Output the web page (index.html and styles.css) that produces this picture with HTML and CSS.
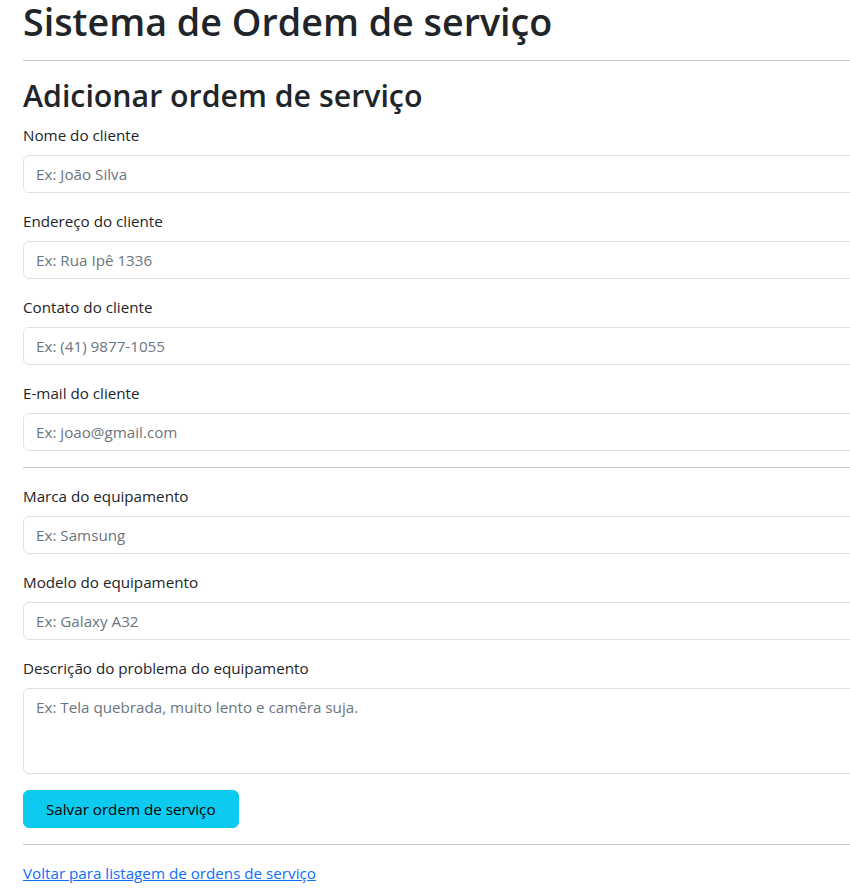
FILE: index.html
```html
<!DOCTYPE html>
<html lang="pt-BR">
<head>
<meta charset="utf-8">
<title>Sistema de Ordem de serviço</title>
<link rel="stylesheet" href="styles.css">
</head>
<body>
<main class="page">
  <h1 class="title">Sistema de Ordem de serviço</h1>
  <hr class="rule">
  <h2 class="subtitle">Adicionar ordem de serviço</h2>
  <form class="form">
    <div class="field">
      <label class="label" for="nome">Nome do cliente</label>
      <input class="control" id="nome" type="text" placeholder="Ex: João Silva">
    </div>
    <div class="field">
      <label class="label" for="endereco">Endereço do cliente</label>
      <input class="control" id="endereco" type="text" placeholder="Ex: Rua Ipê 1336">
    </div>
    <div class="field">
      <label class="label" for="contato">Contato do cliente</label>
      <input class="control" id="contato" type="text" placeholder="Ex: (41) 9877-1055">
    </div>
    <div class="field">
      <label class="label" for="email">E-mail do cliente</label>
      <input class="control" id="email" type="email" placeholder="Ex: joao@gmail.com">
    </div>
    <hr class="rule">
    <div class="field">
      <label class="label" for="marca">Marca do equipamento</label>
      <input class="control" id="marca" type="text" placeholder="Ex: Samsung">
    </div>
    <div class="field">
      <label class="label" for="modelo">Modelo do equipamento</label>
      <input class="control" id="modelo" type="text" placeholder="Ex: Galaxy A32">
    </div>
    <div class="field">
      <label class="label" for="descricao">Descrição do problema do equipamento</label>
      <textarea class="control area" id="descricao" rows="3" placeholder="Ex: Tela quebrada, muito lento e camêra suja."></textarea>
    </div>
    <button class="btn" type="button">Salvar ordem de serviço</button>
  </form>
  <hr class="rule">
  <a class="back" href="#">Voltar para listagem de ordens de serviço</a>
</main>
</body>
</html>
```
FILE: styles.css
```css
html, body {
  margin: 0;
  padding: 0;
  overflow: hidden;
  background: #fff;
}
body {
  font-family: "Open Sans", "Noto Sans", sans-serif;
  font-size: 15.2px;
  line-height: 24px;
  color: #212529;
}
.page {
  width: 1100px;
  padding-left: 23px;
}
.title {
  font-size: 37.7px;
  line-height: 44px;
  font-weight: 600;
  margin: 0 0 8px;
}
.subtitle {
  font-size: 30.3px;
  line-height: 38px;
  font-weight: 600;
  margin: 0 0 8px;
}
.rule {
  margin: 16px 0;
  border: 0;
  border-top: 1px solid #c8c9ca;
  height: 0;
}
.form {
  display: block;
}
.field {
  margin-bottom: 16px;
}
.label {
  display: block;
  margin-bottom: 8px;
}
.control {
  display: block;
  box-sizing: border-box;
  width: 100%;
  height: 38px;
  padding: 6px 12px;
  font: inherit;
  line-height: 24px;
  color: #212529;
  background: #fff;
  border: 1px solid #dee2e6;
  border-radius: 6px;
  outline: none;
}
.control::placeholder {
  color: #6c757d;
  opacity: 1;
}
.area {
  height: 86px;
  resize: none;
}
.btn {
  display: inline-block;
  height: 38px;
  padding: 6px 22px;
  font: inherit;
  line-height: 24px;
  color: #000;
  background: #0dcaf0;
  border: 1px solid #0dcaf0;
  border-radius: 6px;
}
.back {
  color: #0d6efd;
  text-decoration: underline;
}
```
